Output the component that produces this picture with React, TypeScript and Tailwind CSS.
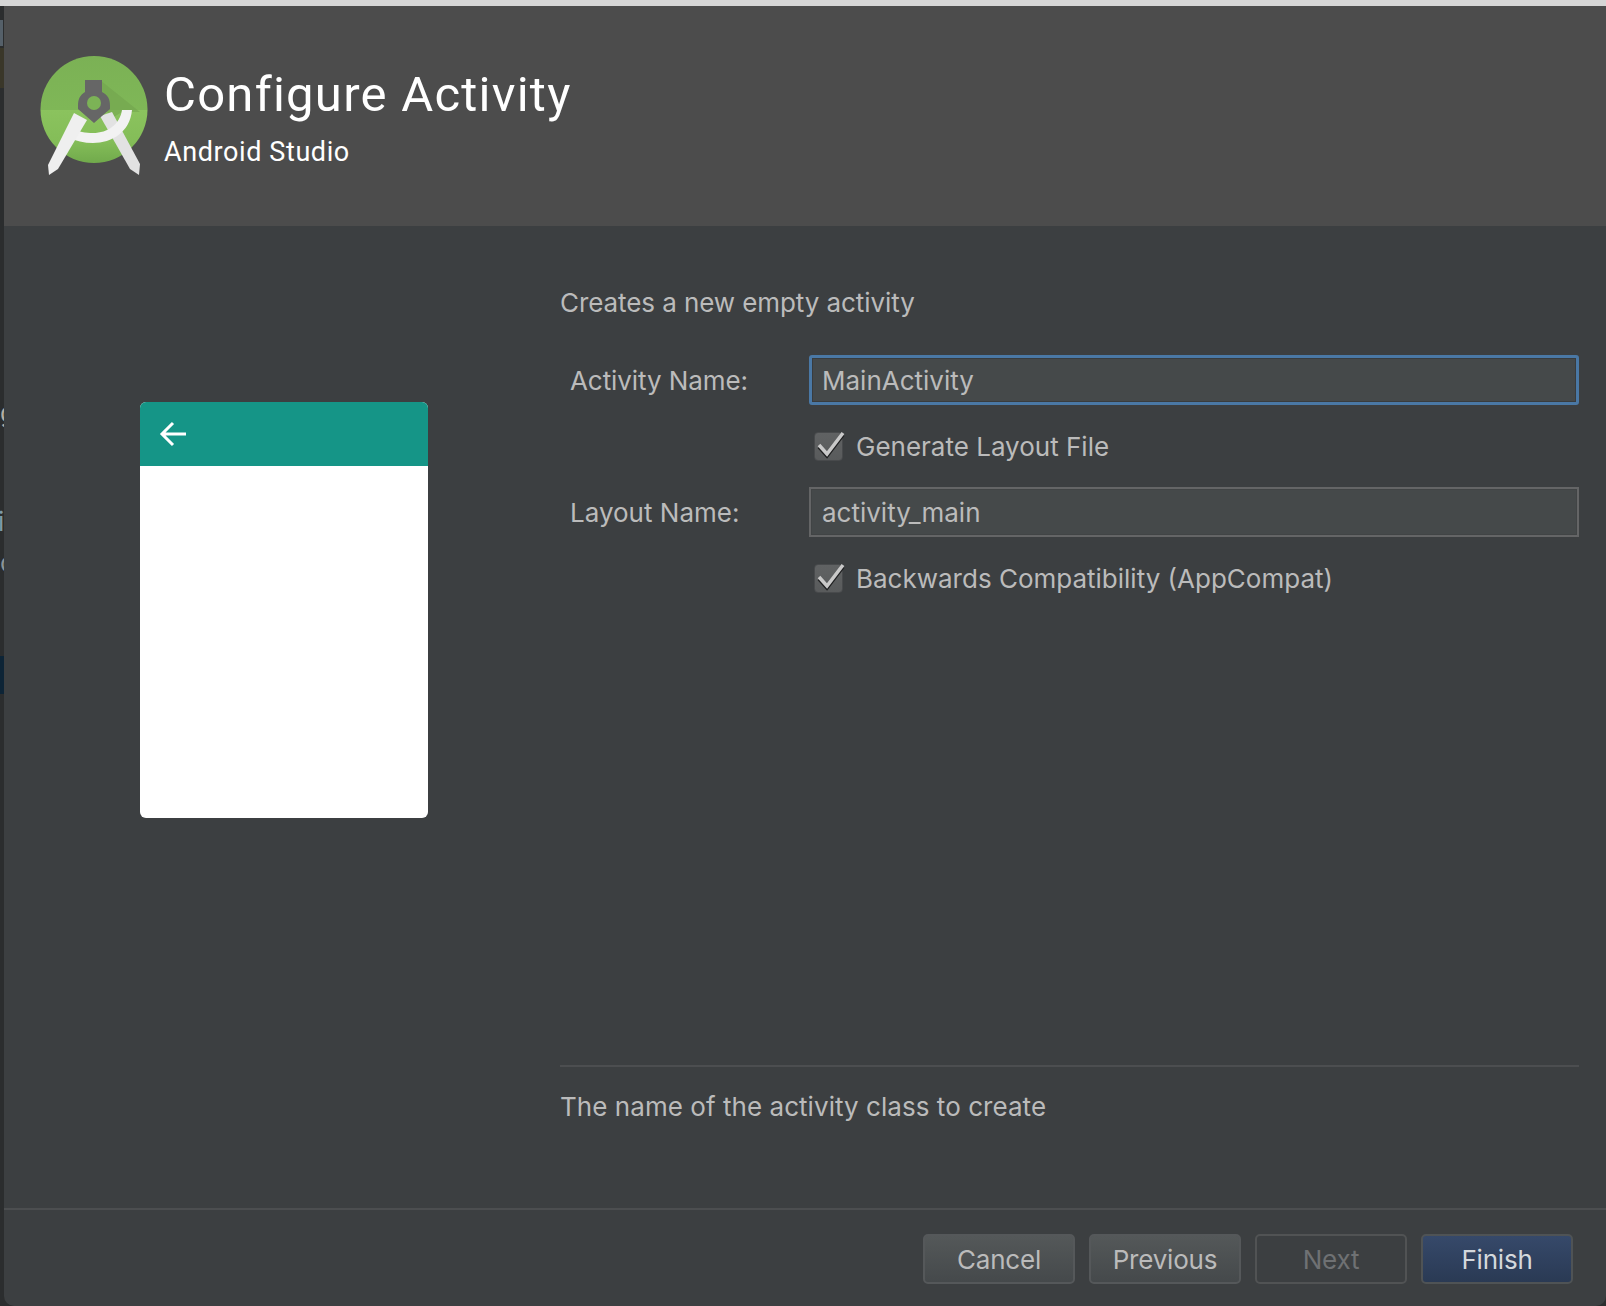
const roboto = "font-['Roboto','Liberation_Sans',sans-serif]";
const inter = "font-['Inter','Liberation_Sans',sans-serif]";

function Logo() {
  return (
    <svg width="116" height="126" viewBox="0 0 116 126" className="shrink-0 blur-[0.5px]">
      <defs>
        <linearGradient id="g" x1="0" y1="0" x2="0" y2="1">
          <stop offset="0" stopColor="#7bb155" />
          <stop offset="0.5" stopColor="#7fb757" />
          <stop offset="0.5" stopColor="#8bc35e" />
          <stop offset="0.8" stopColor="#84bd58" />
          <stop offset="1" stopColor="#71aa4c" />
        </linearGradient>
      </defs>
      <ellipse cx="54" cy="53.5" rx="53.5" ry="53.5" fill="url(#g)" />
      <path d="M60 24 L100 56 L82 56 L72 62 L62 50 Z" fill="#6f9f4c" opacity="0.5" />
      <path d="M60 60 L72 56 L100 108 L99 119 L90 113 Z" fill="#e2e2e2" />
      <path d="M82 54 H92 C90 76 72 87 53 87 C44 87 36 85 27 81 L31 72 C38 76 46 77 53 77 C68 77 80 68 82 54 Z" fill="#f2f2f2" />
      <path d="M34 57 L47 64 L18 113 L9 119 L8 109 Z" fill="#efefef" />
      <path d="M45 24 H62 V36 C68 39 70 43 70 50 V53 L54 67 L38 53 V50 C38 43 40 39 45 36 Z" fill="#666666" />
      <circle cx="54" cy="47" r="7" fill="#7cb356" />
    </svg>
  );
}

function Check() {
  return (
    <span className="relative block h-[30px] w-[32px] shrink-0">
      <span className="absolute left-0 top-[2px] block h-[29px] w-[29px] rounded-[4px] border border-[#484a4c] bg-gradient-to-b from-[#606263] to-[#595b5c]" />
      <svg width="32" height="32" viewBox="0 0 32 32" className="absolute left-0 top-0">
        <path d="M5 15 L13 24 L29 3" fill="none" stroke="#1e1f20" strokeWidth="3.5" transform="translate(0 2)" />
        <path d="M5 15 L13 24 L29 3" fill="none" stroke="#c9c9c9" strokeWidth="3.5" />
      </svg>
    </span>
  );
}

function Field({ value, focused }: { value: string; focused?: boolean }) {
  return (
    <div
      className={
        "flex h-[50px] flex-1 items-center bg-[#45494a] text-[26px] text-[#bbbbbb] " +
        (focused
          ? "rounded-[3px] border-[3px] border-[#4a78a5] pl-[10px] shadow-[inset_0_0_0_1px_#393c3e]"
          : "border-[2px] border-[#646566] pl-[11px] shadow-[inset_0_0_0_1px_#414445]")
      }
    >
      {value}
    </div>
  );
}

function Btn({ label, kind }: { label: string; kind: "normal" | "disabled" | "primary" }) {
  const cls =
    kind === "primary"
      ? "border-[#4f5355] bg-gradient-to-b from-[#36496a] to-[#2a3a54] text-[#d4d8dc]"
      : kind === "disabled"
        ? "border-[#515354] bg-[#3c3f41] text-[#6f7173]"
        : "border-[#55585a] bg-gradient-to-b from-[#545859] to-[#45494b] text-[#bbbbbb]";
  return (
    <div className={"flex h-[50px] w-[152px] items-center justify-center rounded-[5px] border-2 text-[26px] tracking-[-0.2px] " + cls}>
      {label}
    </div>
  );
}

export default function App() {
  return (
    <div className={"flex h-[1306px] w-[1606px] flex-col overflow-hidden bg-[#2b2d2e] " + inter}>
      <div className="h-[6px] shrink-0 bg-[#d6d6d6]" />
      <div className="flex min-h-0 flex-1">
        <div className="relative w-[4px] shrink-0 overflow-hidden bg-[#2b2d2e] text-[26px] leading-[30px]">
          <div className="absolute left-0 top-[14px] h-[26px] w-[3px] bg-[#556069]" />
          <div className="absolute left-0 top-[42px] h-[40px] w-[4px] bg-[#3a3729]" />
          <span className="absolute left-0 top-[392px] text-[#b5aea3]">g</span>
          <span className="absolute left-[-2px] top-[501px] text-[#7f9aa8]">i</span>
          <span className="absolute left-0 top-[542px] text-[#8c9498]">c</span>
          <div className="absolute left-0 top-[650px] h-[38px] w-[4px] bg-[#0d2436]" />
        </div>
        <div className="flex min-w-0 flex-1 flex-col overflow-hidden rounded-b-[10px] bg-[#3c3f41]">
          <header className={"flex h-[220px] shrink-0 items-start bg-[#4c4c4c] pl-[36px] pt-[50px] " + roboto}>
            <Logo />
            <div className="ml-[8px] text-white">
              <div className="mt-[4px] text-[49px] leading-[70px] tracking-[1.25px]">Configure Activity</div>
              <div className="mt-[4px] text-[27px] leading-[36px] tracking-[0.6px]">Android Studio</div>
            </div>
          </header>

          <main className="flex min-h-0 flex-1">
            <aside className="w-[556px] shrink-0 pl-[136px] pt-[176px]">
              <div className="h-[416px] w-[288px] overflow-hidden rounded-[6px] bg-white">
                <div className="flex h-[64px] items-center bg-[#159587] pl-[19px]">
                  <svg width="28" height="26" viewBox="0 0 28 26">
                    <path d="M27 13 H3 M14 2 L3 13 L14 24" fill="none" stroke="#ffffff" strokeWidth="3" />
                  </svg>
                </div>
              </div>
            </aside>

            <section className="flex min-w-0 flex-1 flex-col pr-[27px] pt-[59px] text-[#bbbbbb]">
              <p className="text-[26px] leading-[36px] tracking-[-0.08px]">Creates a new empty activity</p>
              <div className="mt-[34px] flex items-center pl-[10px]">
                <span className="w-[239px] shrink-0 text-[26px] tracking-[-0.08px]">Activity Name:</span>
                <Field value="MainActivity" focused />
              </div>
              <div className="mt-[24px] flex items-center pl-[254px]">
                <Check />
                <span className="ml-[10px] translate-y-[2px] text-[26px] leading-[32px]">Generate Layout File</span>
              </div>
              <div className="mt-[26px] flex items-center pl-[10px]">
                <span className="w-[239px] shrink-0 text-[26px]">Layout Name:</span>
                <Field value="activity_main" />
              </div>
              <div className="mt-[24px] flex items-center pl-[254px]">
                <Check />
                <span className="ml-[10px] translate-y-[2px] text-[26px] leading-[32px]">Backwards Compatibility (AppCompat)</span>
              </div>
              <div className="mt-auto border-t-2 border-[#4c4e50] pb-[83px] pt-[22px]">
                <p className="text-[26px] leading-[36px] tracking-[0.05px]">The name of the activity class to create</p>
              </div>
            </section>
          </main>

          <footer className="flex h-[98px] shrink-0 justify-end gap-[14px] border-t-2 border-[#4c4e50] pr-[33px] pt-[24px]">
            <Btn label="Cancel" kind="normal" />
            <Btn label="Previous" kind="normal" />
            <Btn label="Next" kind="disabled" />
            <Btn label="Finish" kind="primary" />
          </footer>
        </div>
      </div>
    </div>
  );
}
